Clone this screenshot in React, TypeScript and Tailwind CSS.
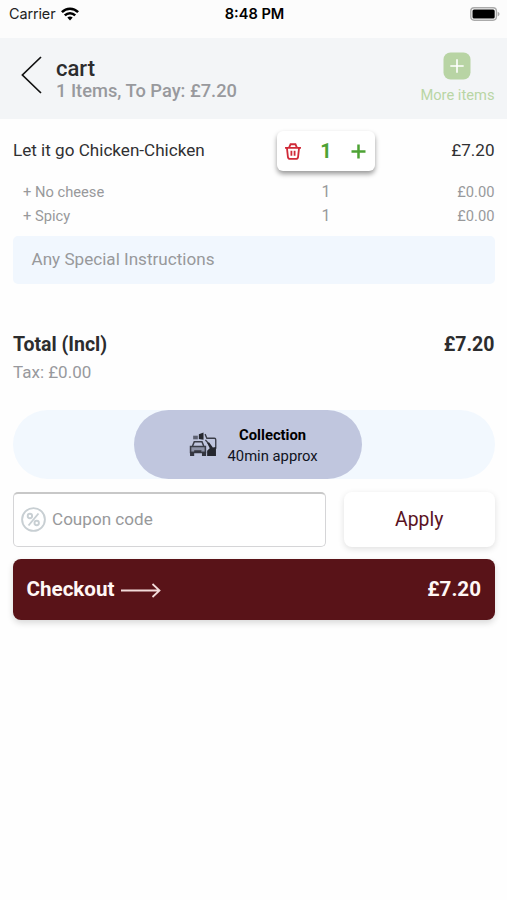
import React from 'react';

interface Extra {
  name: string;
  quantity: number;
  price: string;
}

const extras: Extra[] = [
  { name: 'No cheese', quantity: 1, price: '£0.00' },
  { name: 'Spicy', quantity: 1, price: '£0.00' },
];

const StatusBar: React.FC = () => (
  <div className="h-[38px] bg-[#fcfcfc] grid grid-cols-[1fr_auto_1fr] items-start pl-[9px] pr-[7px] font-[Inter,sans-serif] text-black">
    <div className="flex items-center gap-[6px] h-[27px]">
      <span className="text-[14.4px] tracking-[-0.1px] text-[#222]">Carrier</span>
      <svg className="w-[18px] h-[14px]" viewBox="0 0 18 14" fill="none" stroke="black" strokeWidth="2.5">
        <path d="M.9 5.1C5.4.5 12.6.5 17.1 5.1" />
        <path d="M3.8 8.3c2.9-2.9 7.5-2.9 10.4 0" />
        <path d="M6.3 10.6c1.6-1.4 3.8-1.4 5.4 0L9 13.5z" fill="black" stroke="none" />
      </svg>
    </div>
    <div className="h-[29px] flex items-center text-[14.6px] font-semibold">8:48 PM</div>
    <div className="flex items-center justify-end h-[27px]">
      <svg className="w-[30px] h-[14px]" viewBox="0 0 30 14">
        <rect x=".8" y=".8" width="25.6" height="12.4" rx="3.4" fill="#fff" stroke="#aaa" strokeWidth="1.4" />
        <rect x="2.5" y="2.5" width="22.2" height="9" rx="1.5" fill="black" />
        <path d="M27.7 4.7c2.4.8 2.4 3.8 0 4.6z" fill="#aaa" />
      </svg>
    </div>
  </div>
);

const Header: React.FC = () => (
  <header className="h-[81px] bg-[#f3f5f7] flex items-start pl-[21px] pr-[12.5px]">
    <svg className="w-[21px] h-[38px] mt-[18px]" viewBox="0 0 21 38" fill="none" stroke="#111" strokeWidth="1.7">
      <path d="M20 1L1.4 19 20 37" />
    </svg>
    <div className="ml-[14px] mt-[18px] flex-1">
      <h1 className="text-[22px] leading-[25px] font-medium text-[#2c2c2e]">cart</h1>
      <p className="text-[18.3px] leading-[19px] font-medium text-[#98999d]">1 Items, To Pay: £7.20</p>
    </div>
    <div className="mt-[14px] flex flex-col items-center text-[#b9d5a5]">
      <svg className="w-[28px] h-[28px]" viewBox="0 0 28 28">
        <rect x=".5" y=".5" width="27" height="27" rx="7" fill="#b8d4a4" />
        <path d="M14 7.3v13.4M7.3 14h13.4" stroke="white" strokeWidth="1.6" />
      </svg>
      <span className="mt-[5px] text-[14.7px] leading-[20px]">More items</span>
    </div>
  </header>
);

const QuantityPicker: React.FC = () => (
  <div className="w-[98px] h-[40px] rounded-[6px] bg-white shadow-[0_3px_5px_rgba(0,0,0,0.4)] flex items-center pl-[8px] pr-[9px]">
    <svg className="w-[16px] h-[17px]" viewBox="0 0 15 16" fill="none" stroke="#d02a38" strokeWidth="1.7">
      <path d="M0 4.6h15M3.8 4.4L5.2 1.2h4.6l1.4 3.2M1.8 4.6l.9 8.5q.2 1.9 2 1.9h5.6q1.8 0 2-1.9l.9-8.5M6 7.4v4.6M9 7.4v4.6" />
    </svg>
    <span className="flex-1 text-center text-[20px] font-bold text-[#4da335]">1</span>
    <svg className="w-[15px] h-[15px]" viewBox="0 0 15 15" stroke="#4da335" strokeWidth="2.5">
      <path d="M7.5.5v14M.5 7.5h14" />
    </svg>
  </div>
);

const CollectionIcon: React.FC = () => (
  <svg className="w-[28px] h-[25px]" viewBox="0 0 27 24">
    {/* car */}
    <path d="M3.4 13.5l1.7-4.2h7.4l1.7 4.2" fill="none" stroke="#3a3d48" strokeWidth="1.5" />
    <path d="M1.5 14h14.3v5.8H1.5z" fill="#8d92a6" stroke="#3a3d48" strokeWidth="1.5" />
    <path d="M1 19h4v4H1zM12.5 19h4v4h-4zM5 17.5h7v2.5H5z" fill="#34363f" />
    {/* driver and bag */}
    <path d="M4 3.5h4.5V7H4z" fill="#5c6070" />
    <path d="M9.5 2L14 .5v7l-4.5-.8z" fill="#25272e" />
    <path d="M15.5 2l1.7 4h7.3q1.3 0 1.3 1.5V16M15.8 7.5l3 3.5" fill="none" stroke="#3a3d48" strokeWidth="1.3" />
    <path d="M17.5 10.5l2-.5 3.5 5 3-.5V23h-8.5v-5l2.5-2.5z" fill="#25272e" />
  </svg>
);

const App: React.FC = () => {
  return (
    <div className="h-screen w-full overflow-hidden bg-[#fefefe] font-[Roboto,sans-serif]">
      <StatusBar />
      <Header />

      <main className="pl-[13px] pr-[12.5px] pt-[12px]">
        {/* Item */}
        <div className="grid grid-cols-[264px_98px_1fr] h-[40px] items-center text-[17.1px] text-[#303032]">
          <span>Let it go Chicken-Chicken</span>
          <QuantityPicker />
          <span className="text-right">£7.20</span>
        </div>

        {/* Extras */}
        <div className="mt-[8.5px] text-[14.7px] text-[#98999b]">
          {extras.map((extra) => (
            <div key={extra.name} className="grid grid-cols-[264px_98px_1fr] h-[24.5px] items-center">
              <span className="pl-[10px]">+ {extra.name}</span>
              <span className="text-center pb-[1px] text-[16px]">{extra.quantity}</span>
              <span className="text-right">{extra.price}</span>
            </div>
          ))}
        </div>

        <div className="mt-[7.5px] h-[48px] rounded-[5px] bg-[#f1f7fe] flex items-center pl-[18.5px] text-[17.1px] text-[#98999b]">
          Any Special Instructions
        </div>

        {/* Total */}
        <div className="mt-[47px] flex justify-between text-[19.5px] leading-[27px] font-bold text-[#2c2c2e]">
          <span>Total (Incl)</span>
          <span>£7.20</span>
        </div>
        <p className="mt-[3px] text-[17px] leading-[22px] text-[#98999d]">Tax: £0.00</p>

        <div className="mt-[27px] h-[69px] rounded-full bg-[#f2f8fe] pl-[120.5px]">
          <div className="w-[228.5px] h-full rounded-full bg-[#c0c6de] flex items-center pl-[55px] gap-[11px] text-[#10131d]">
            <CollectionIcon />
            <div className="text-center text-[14.8px] leading-[20.5px] pt-[2px]">
              <p className="font-bold text-black">Collection</p>
              <p>40min approx</p>
            </div>
          </div>
        </div>

        {/* Coupon */}
        <div className="mt-[13px] flex gap-[18px] h-[55px]">
          <div className="w-[313px] border border-[#d5d5d7] border-t-2 border-t-[#c8c8c8] rounded-[5px] bg-white flex items-center pl-[7px] pb-[1px] gap-[6px] text-[17.1px] text-[#98999b]">
            <svg className="w-[25px] h-[25px]" viewBox="0 0 25 25" fill="none" stroke="#c8cfd3" strokeWidth="1.9">
              <circle cx="12.5" cy="12.5" r="11.4" />
              <circle cx="8.9" cy="9" r="2.2" />
              <circle cx="15.7" cy="16" r="2.2" />
              <path d="M17.5 6.5l-10 12" />
            </svg>
            Coupon code
          </div>
          <button className="flex-1 rounded-[8px] bg-white shadow-[0_2px_6px_rgba(0,0,0,0.12)] text-[19.4px] text-[#5a1323]">
            Apply
          </button>
        </div>

        <button className="mt-[12px] w-full h-[61px] rounded-[8px] bg-[#591318] shadow-[0_3px_6px_rgba(0,0,0,0.15)] flex items-center px-[13.5px] text-[20.6px] font-bold text-[#fff7f5]">
          <span>Checkout</span>
          <svg className="ml-[6px] mt-[1px] w-[40px] h-[15px]" viewBox="0 0 40 15" fill="none" stroke="#f3dcda" strokeWidth="1.8">
            <path d="M0 7.5h38M31.5 1l7 6.5-7 6.5" />
          </svg>
          <span className="ml-auto">£7.20</span>
        </button>
      </main>
    </div>
  );
};

export default App;
